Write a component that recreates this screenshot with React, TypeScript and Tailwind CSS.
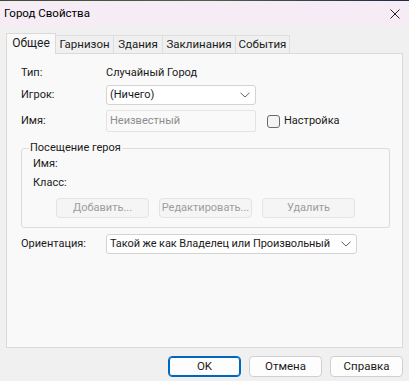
import React from "react";

const Chevron = () => (
  <svg width="10" height="6" viewBox="0 0 10 6" className="shrink-0">
    <path d="M0.5 0.8 L5 5 L9.5 0.8" fill="none" stroke="#606060" strokeWidth="1" />
  </svg>
);

function Tab({ label, active, w }: { label: string; active?: boolean; w: string }) {
  if (active) {
    return (
      <div
        className={`${w} h-[21px] -mb-px relative z-10 bg-[#f9f9f9] border border-b-0 border-[#dadada] flex items-center justify-center text-[12px] text-[#1a1a1a] pb-[2px]`}
      >
        {label}
      </div>
    );
  }
  return (
    <div
      className={`${w} h-[18px] bg-[#f0f0f0] border border-l-0 border-b-0 border-[#dedede] flex items-center justify-center text-[11.5px] text-[#1a1a1a]`}
    >
      {label}
    </div>
  );
}

function DisabledBtn({ label }: { label: string }) {
  return (
    <div className="w-[93px] h-[20px] rounded-[4px] border border-[#e3e3e3] bg-[#f5f5f5] flex items-center justify-center text-[11px] text-[#9d9d9d]">
      {label}
    </div>
  );
}

export default function App() {
  return (
    <div
      className="w-[409px] h-[381px] bg-[#f0f0f0] flex flex-col overflow-hidden text-[#1a1a1a] whitespace-nowrap"
      style={{ fontFamily: "Roboto, 'Liberation Sans', sans-serif" }}
    >
      <div className="h-px bg-gradient-to-r from-[#3d4b33] via-[#51604a] to-[#1f2b45]" />
      <div className="h-[25px] bg-[#f5ecf5] flex items-center justify-between pl-[4px] pr-[9px]">
        <span className="text-[11.5px] text-black">Город Свойства</span>
        <svg width="10" height="10" viewBox="0 0 10 10">
          <path d="M0.5 0.5 L9.5 9.5 M9.5 0.5 L0.5 9.5" stroke="#222" strokeWidth="1" />
        </svg>
      </div>

      <div className="px-[6px] pt-[7px] flex flex-col">
        <div className="flex items-end pl-0">
          <Tab label="Общее" active w="w-[50px]" />
          <Tab label="Гарнизон" w="w-[58px]" />
          <Tab label="Здания" w="w-[49px]" />
          <Tab label="Заклинания" w="w-[73px]" />
          <Tab label="События" w="w-[54px]" />
        </div>
        <div className="h-[295px] border border-[#dadada] bg-[#f9f9f9] pl-[14px] pt-[11px] flex flex-col text-[11px]">
          <div className="flex items-center h-[16px]">
            <span className="w-[85px]">Тип:</span>
            <span>Случайный Город</span>
          </div>
          <div className="flex items-center mt-[4px]">
            <span className="w-[85px]">Игрок:</span>
            <div className="w-[150px] h-[20px] bg-white border border-[#d3d3d3] rounded-[3px] flex items-center justify-between pl-[3px] pr-[5px]">
              <span>(Ничего)</span>
              <Chevron />
            </div>
          </div>
          <div className="flex items-center mt-[5px]">
            <span className="w-[85px]">Имя:</span>
            <div className="w-[150px] h-[22px] bg-[#f9f9f9] border border-[#e4e4e4] rounded-[2px] flex items-center pl-[3px] text-[#8c8c8c]">
              Неизвестный
            </div>
            <div className="ml-[11px] w-[13px] h-[13px] rounded-[3px] border border-[#6a6a6a] bg-[#f4f4f4]" />
            <span className="ml-[4px]">Настройка</span>
          </div>

          <fieldset className="mt-[9px] w-[369px] border border-[#dcdcdc] rounded-[3px] pb-[9px]">
            <legend className="ml-[7px] px-[1px] leading-[14px]">Посещение героя</legend>
            <div className="pl-[11px] flex flex-col">
              <div className="h-[16px] mt-[1px] flex items-center">Имя:</div>
              <div className="h-[16px] mt-[3px] flex items-center">Класс:</div>
            </div>
            <div className="mt-[7px] flex justify-center gap-[10px]">
              <DisabledBtn label="Добавить..." />
              <DisabledBtn label="Редактировать..." />
              <DisabledBtn label="Удалить" />
            </div>
          </fieldset>

          <div className="flex items-center mt-[6px]">
            <span className="w-[85px]">Ориентация:</span>
            <div className="w-[251px] h-[20px] bg-white border border-[#d3d3d3] rounded-[3px] flex items-center justify-between pl-[3px] pr-[5px]">
              <span className="tracking-[-0.1px]">Такой же как Владелец или Произвольный</span>
              <Chevron />
            </div>
          </div>
        </div>
      </div>

      <div className="flex justify-end gap-[8px] pr-[6px] mt-[8px] text-[11.5px]">
        <div className="w-[73px] h-[21px] rounded-[4px] border border-[#0067c0] bg-[#fdfdfd] shadow-[inset_0_0_0_1px_#0067c0] flex items-center justify-center">
          OK
        </div>
        <div className="w-[73px] h-[21px] rounded-[4px] border border-[#d0d0d0] bg-[#fdfdfd] flex items-center justify-center">
          Отмена
        </div>
        <div className="w-[73px] h-[21px] rounded-[4px] border border-[#d0d0d0] bg-[#fdfdfd] flex items-center justify-center">
          Справка
        </div>
      </div>
    </div>
  );
}
